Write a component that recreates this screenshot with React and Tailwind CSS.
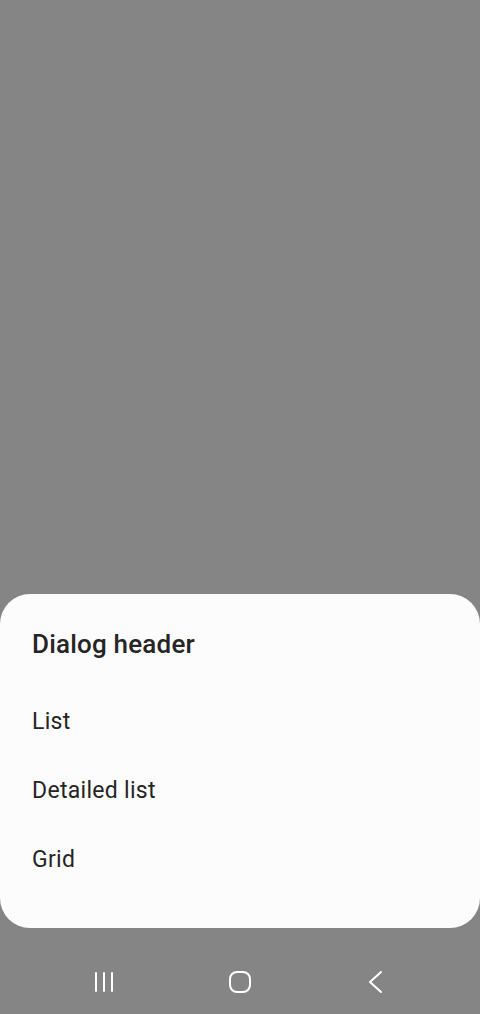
export default function App() {
  return (
    <div
      className="flex h-[1014px] w-[480px] flex-col bg-[#858585]"
      style={{ fontFamily: "Roboto, 'Noto Sans', sans-serif" }}
    >
      <div className="flex-1" />
      <div className="flex flex-col rounded-[30px] bg-[#fcfcfc] pt-[34px] pb-[34px] px-[32px] text-[#252525]">
        <div className="flex h-[32px] items-center text-[26px] font-medium leading-[32px] tracking-[0.2px]">
          Dialog header
        </div>
        <div className="h-[27px]" />
        <div className="flex h-[69px] items-center text-[23px] leading-[30px] tracking-[0.3px]">List</div>
        <div className="flex h-[69px] items-center text-[23px] leading-[30px] tracking-[0.3px]">Detailed list</div>
        <div className="flex h-[69px] items-center text-[23px] leading-[30px] tracking-[0.3px]">Grid</div>
      </div>
      <div className="mt-[30px] grid h-[48px] grid-cols-3 px-[36px] mb-[8px]">
        <div className="flex items-center justify-center">
          <svg width="24" height="24" viewBox="0 0 24 24" fill="none" stroke="#ffffff" strokeWidth="2" strokeLinecap="round">
            <line x1="4" y1="3" x2="4" y2="21" />
            <line x1="12" y1="3" x2="12" y2="21" />
            <line x1="20" y1="3" x2="20" y2="21" />
          </svg>
        </div>
        <div className="flex items-center justify-center">
          <svg width="24" height="24" viewBox="0 0 24 24" fill="none" stroke="#ffffff" strokeWidth="2">
            <rect x="2" y="2" width="20" height="20" rx="7" />
          </svg>
        </div>
        <div className="flex items-center justify-center">
          <svg width="24" height="24" viewBox="0 0 24 24" fill="none" stroke="#ffffff" strokeWidth="2" strokeLinecap="round" strokeLinejoin="round">
            <polyline points="17,2 6,12 17,22" />
          </svg>
        </div>
      </div>
    </div>
  );
}
